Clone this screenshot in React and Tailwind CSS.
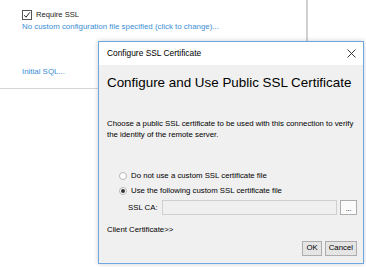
import React from 'react';

const font = { fontFamily: '"Liberation Sans", Arial, sans-serif' };

const Radio = ({ checked, label }) => (
  <div className="flex items-center h-[15px]">
    <span className="w-[8px] h-[8px] rounded-full border border-[#b5b5b5] bg-white flex items-center justify-center">
      {checked && <span className="w-[4px] h-[4px] rounded-full bg-[#333]" />}
    </span>
    <span className="ml-[4px] text-[7.8px] text-black">{label}</span>
  </div>
);

export default function App() {
  return (
    <div className="relative w-[366px] h-[267px] overflow-hidden bg-white" style={font}>
      {/* background connection panel */}
      <div className="flex">
        <div className="w-[306px] h-[89px] border-b border-[#d4d4d4] pl-[22px] pt-[10px]">
          <div className="flex items-center h-[10px]">
            <span className="w-[10px] h-[10px] border border-[#555] bg-white flex items-center justify-center">
              <svg width="8" height="8" viewBox="0 0 8 8">
                <path d="M1.2 4.2 L3 6.2 L6.8 1.4" fill="none" stroke="#222" strokeWidth="1" />
              </svg>
            </span>
            <span className="ml-[4px] text-[7.6px] text-[#222]">Require SSL</span>
          </div>
          <div className="mt-[2px] text-[7.9px] leading-[10px] text-[#3a8ed4]">
            No custom configuration file specified (click to change)...
          </div>
          <div className="mt-[35px] text-[7.9px] leading-[10px] text-[#3a8ed4]">Initial SQL...</div>
        </div>
        <div className="w-[2px] h-[89px] bg-[#d0d0d0]" />
      </div>

      {/* dialog window */}
      <div className="absolute left-[98px] top-[41px] w-[266px] h-[223px] border border-[#6fa6df] bg-[#f0f0f0] flex flex-col shadow-[0_0_5px_rgba(0,0,0,0.2)]">
        <div className="h-[23px] bg-white flex items-center justify-between pl-[8px] pr-[7px]">
          <span className="text-[8.4px] text-black">Configure SSL Certificate</span>
          <svg width="9" height="9" viewBox="0 0 9 9">
            <path d="M0.5 0.5 L8.5 8.5 M8.5 0.5 L0.5 8.5" stroke="#222" strokeWidth="0.9" />
          </svg>
        </div>
        <div className="flex-1 flex flex-col pl-[8px] pr-[6px]">
          <div className="mt-[10px] text-[13.4px] leading-[16px] text-black">
            Configure and Use Public SSL Certificate
          </div>
          <div className="mt-[27px] text-[7.8px] leading-[11px] text-black">
            Choose a public SSL certificate to be used with this connection to verify
            <br />
            the identity of the remote server.
          </div>
          <div className="mt-[28px] pl-[12px] flex flex-col">
            <Radio label="Do not use a custom SSL certificate file" />
            <Radio checked label="Use the following custom SSL certificate file" />
            <div className="mt-[2px] flex items-center pl-[9px]">
              <span className="text-[7.8px] text-black w-[34px]">SSL CA:</span>
              <div className="w-[177px] h-[15px] border border-[#cfcfcf] bg-[#f0f0f0]" />
              <div className="ml-[3px] w-[17px] h-[15px] border border-[#adadad] bg-[#fbfbfb] flex items-end justify-center text-[7px] leading-[11px] text-black">...</div>
            </div>
          </div>
          <div className="mt-[9px] text-[7.8px] text-black">Client Certificate&gt;&gt;</div>
          <div className="mt-[5px] flex justify-end gap-[3px]">
            <div className="h-[15px] px-[3px] border border-[#adadad] bg-[#e5e5e5] flex items-center text-[7.8px] text-black">OK</div>
            <div className="h-[15px] px-[3px] border border-[#adadad] bg-[#e5e5e5] flex items-center text-[7.8px] text-black">Cancel</div>
          </div>
        </div>
      </div>
    </div>
  );
}
